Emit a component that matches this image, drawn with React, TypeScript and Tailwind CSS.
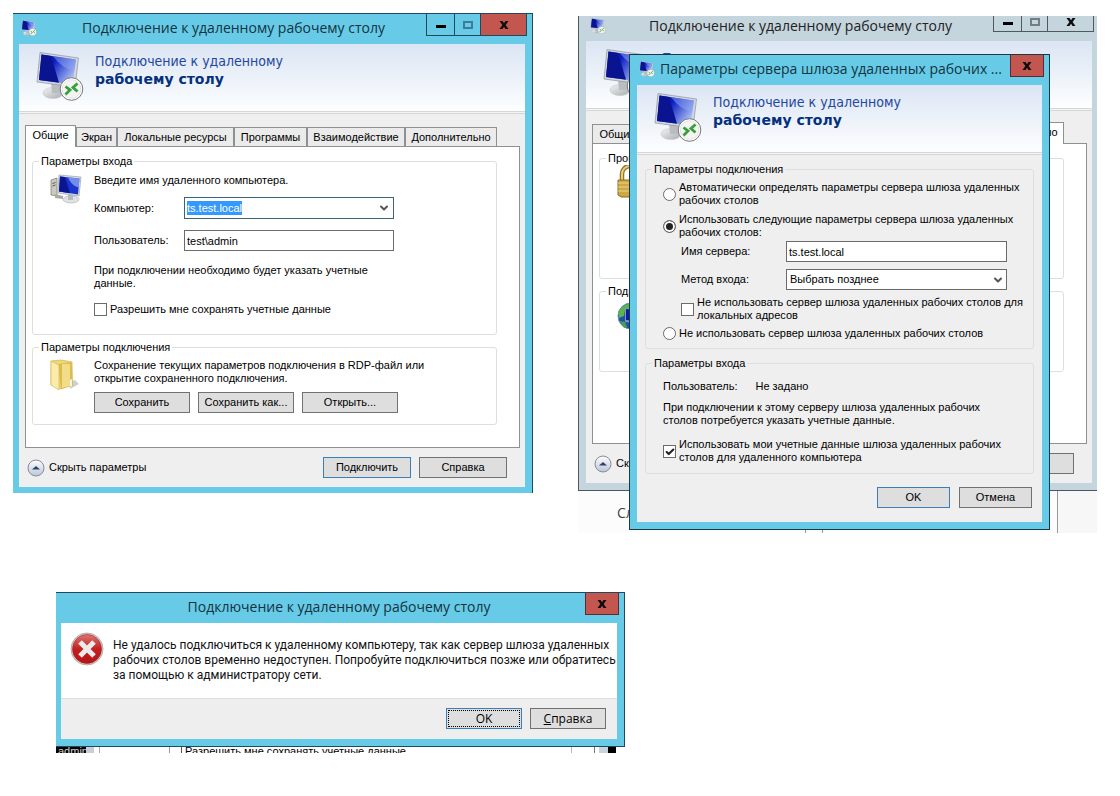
import type { ReactNode } from 'react';
import { Check, ChevronDown } from 'lucide-react';

const uiFont = "font-['Liberation_Sans',Arial,sans-serif]";
const titleFont = "font-['Open_Sans','Segoe_UI',sans-serif]";

function RdpIcon({ className }: { className: string }) {
  return (
    <svg viewBox="0 0 48 49" className={className} aria-hidden="true">
      <defs>
        <linearGradient id="screen" x1="0" y1="0" x2="1" y2="0.6">
          <stop offset="0" stopColor="#1420a8" />
          <stop offset="0.4" stopColor="#0b1cc0" />
          <stop offset="1" stopColor="#a9bdf5" />
        </linearGradient>
        <linearGradient id="stand" x1="0" y1="0" x2="1" y2="1">
          <stop offset="0" stopColor="#f4f4f4" />
          <stop offset="1" stopColor="#a8acb0" />
        </linearGradient>
      </defs>
      <ellipse cx="17" cy="41" rx="10" ry="5.5" fill="url(#stand)" stroke="#c2c6ca" strokeWidth="0.6" />
      <path d="M15 30l9 2v9h-8z" fill="#b9bdc2" />
      <path d="M4 0.5L42.5 6 39 35 1 30z" fill="#d3d7dd" stroke="#8d949e" strokeWidth="0.7" />
      <path d="M5.5 2.5L40 7.5 36.5 32.5 3 28z" fill="url(#screen)" />
      <path d="M5.5 2.5L15 4l8 26.7L3 28z" fill="#0a1390" />
      <path d="M17 4.2l23 3.3-1.5 11C31 18 23 12 17 4.2z" fill="#8fa9f5" opacity="0.5" />
      <circle cx="35.5" cy="37" r="11.3" fill="#fff" stroke="#777" strokeWidth="1" />
      <circle cx="35.5" cy="37" r="9.3" fill="#f4f4f2" stroke="#ddd" strokeWidth="0.8" />
      <path d="M29.5 34.5l4.5 3.5-4.5 4.5M41.5 31.5l-4.5 4 4.5 4" fill="none" stroke="#35a03a" strokeWidth="2.8" />
    </svg>
  );
}

function ComputerIcon() {
  return (
    <svg viewBox="0 0 32 30" className="h-[30px] w-8 shrink-0" aria-hidden="true">
      <path d="M1 6l6-2v18l-6-1z" fill="#c9c9bd" stroke="#85857c" strokeWidth="0.8" />
      <path d="M2.5 9.5l3-1M2.5 12l3-1" stroke="#55604e" />
      <path d="M5 20l8 2v3l-8-1z" fill="#a9aaa4" />
      <ellipse cx="21" cy="25.5" rx="8" ry="3.5" fill="#dfe1e4" stroke="#adb0b4" strokeWidth="0.6" />
      <path d="M18 20l5 1v5h-5z" fill="#b7bbc0" />
      <path d="M9 1l22 2-2 19-21-3z" fill="#dde1e6" stroke="#9aa0a8" strokeWidth="0.7" />
      <path d="M10 2.5L29.5 4.5 28 20.5 9 17.5z" fill="#1b34d0" />
      <path d="M10 2.5l5 .5 5 16.2L9 17.5z" fill="#0a1590" />
      <path d="M18 3.5L29.5 4.5l-.8 9C24 12.5 20 8.5 18 3.5z" fill="#8aa4f3" opacity="0.8" />
    </svg>
  );
}

function FolderIcon() {
  return (
    <svg viewBox="0 0 32 32" className="size-8 shrink-0" aria-hidden="true">
      <path d="M20 30l9-5-4-4-6 2z" fill="#cfcfcf" />
      <path d="M1 2l10-1 11 2v22l-11 5L1 26z" fill="#f0d878" stroke="#d0b24e" strokeWidth="0.7" />
      <path d="M8 5l14-2 1 24-12 3z" fill="#dcbb4f" />
      <path d="M12 5h8v22l-8 2z" fill="#f2dd86" />
      <path d="M1 2l8 4v25l-8-5z" fill="#fbecab" stroke="#d6ba5a" strokeWidth="0.7" />
      <path d="M20 21l2-1v7l-2 1z" fill="#eef3f2" />
    </svg>
  );
}

function LockIcon() {
  return (
    <svg viewBox="0 0 28 34" className="h-[34px] w-7" aria-hidden="true">
      <path d="M5 17V9a8 8 0 0 1 16 0v8" fill="none" stroke="#8f7327" strokeWidth="4.5" />
      <path d="M5 17V9a8 8 0 0 1 16 0v8" fill="none" stroke="#e8cf7a" strokeWidth="2" />
      <path d="M1 15h24v17H4l-3-2z" fill="#cfa843" stroke="#8d6c20" />
      <path d="M1 18h24M1 22h24M1 26h24" stroke="#ecd58b" />
    </svg>
  );
}

function GlobeIcon() {
  return (
    <svg viewBox="0 0 32 32" className="size-8" aria-hidden="true">
      <circle cx="14" cy="14" r="13" fill="#1f4fa8" stroke="#6d90b8" />
      <path d="M2 10c2-6 8-9 14-8l-3 5-5 1-1 6-5 2z" fill="#5cb548" />
      <path d="M3 19l5 1 2 5-3 1z" fill="#49a348" />
      <path d="M8 6l18 2v14L8 20z" fill="#7f97cf" />
      <path d="M9 7l16 2v11L9 18z" fill="#101c9c" />
      <path d="M14 25h10l2 4H13z" fill="#a9c6df" />
    </svg>
  );
}

function ErrorIcon() {
  return (
    <svg viewBox="0 0 34 34" className="size-[34px] shrink-0" aria-hidden="true">
      <defs>
        <linearGradient id="err" x1="0" y1="0" x2="0" y2="1">
          <stop offset="0" stopColor="#dd7773" />
          <stop offset="0.5" stopColor="#c31f20" />
          <stop offset="1" stopColor="#b81416" />
        </linearGradient>
      </defs>
      <circle cx="17" cy="17" r="16" fill="#d9d3d3" stroke="#a79a9a" strokeWidth="0.8" />
      <circle cx="17" cy="17" r="14.5" fill="url(#err)" stroke="#9b2426" strokeWidth="0.6" />
      <path d="M10 10l14 14M24 10L10 24" stroke="#eceaea" strokeWidth="5.2" />
    </svg>
  );
}

function CollapseIcon() {
  return (
    <svg viewBox="0 0 18 18" className="size-[18px]" aria-hidden="true">
      <defs>
        <linearGradient id="knob" x1="0" y1="0" x2="0" y2="1">
          <stop offset="0" stopColor="#fdfdfd" />
          <stop offset="1" stopColor="#bcc6d6" />
        </linearGradient>
      </defs>
      <circle cx="9" cy="9" r="8" fill="url(#knob)" stroke="#858d9b" />
      <path d="M5 10.5L9 7l4 3.5z" fill="#2a4170" />
    </svg>
  );
}

function CloseGlyph() {
  return (
    <svg viewBox="0 0 10 8" className="h-2 w-2.5" aria-hidden="true">
      <path d="M.5 0h3L5 2.2 6.5 0h3L6.6 4l2.9 4h-3L5 5.8 3.5 8h-3l2.9-4z" fill="#0d0d0d" />
    </svg>
  );
}

function CaptionButtons({ active }: { active: boolean }) {
  const line = active ? 'border-[#1d4a5e]' : 'border-[#4e585d]';
  const size = active ? 'h-[22px]' : 'h-4';
  return (
    <div className={`flex ${size}`}>
      <button aria-label="Свернуть" className={`flex w-7 items-center justify-center border-b border-l ${line}`}>
        <span className={`h-[3px] w-2.5 bg-black ${active ? 'mt-1' : ''}`} />
      </button>
      <button aria-label="Развернуть" className={`flex w-[26px] items-center justify-center border-b border-l ${line}`}>
        <span className={`h-2 w-2.5 border-2 ${active ? 'border-[#3c7c99]' : 'mb-1 border-[#737d82]'}`} />
      </button>
      <button
        aria-label="Закрыть"
        className={`flex w-[47px] items-center justify-center border-x border-b ${line} ${active ? 'bg-[#c3564e]' : 'pb-1'}`}
      >
        <CloseGlyph />
      </button>
    </div>
  );
}

function CloseButton() {
  return (
    <button
      aria-label="Закрыть"
      className="-mr-0.5 flex h-[22px] w-[34px] shrink-0 items-center justify-center border-x border-b border-[#5c2a35] bg-[#c3564e]"
    >
      <CloseGlyph />
    </button>
  );
}

function Banner({ product, name }: { product: string; name: string }) {
  return (
    <div>
      <div className="flex h-[67px] gap-[11px] bg-linear-to-b from-[#dbe5f3] to-[#fdfeff] pt-2 pl-[17px]">
        <RdpIcon className="h-[49px] w-12" />
        <div className="text-sm leading-[18px] text-[#1d47a0]">
          <p className="font-['DejaVu_Sans_Condensed',Tahoma,sans-serif]">{product}</p>
          <p className="font-['DejaVu_Sans',Verdana,sans-serif] font-bold text-[#04307e]">{name}</p>
        </div>
      </div>
      <div className="h-[3px] border-y border-[#d6d6d6] bg-[#f4f4f4]" />
    </div>
  );
}

function Group({ title, className, body, children }: { title: string; className?: string; body: string; children: ReactNode }) {
  return (
    <fieldset className={`min-w-0 rounded-[3px] border border-[#dcdfe1] ${className ?? ''}`}>
      <legend className="ml-1.5 px-0.5">{title}</legend>
      <div className={`pl-[17px] ${body}`}>{children}</div>
    </fieldset>
  );
}

function PushButton({ children, className, primary }: { children?: ReactNode; className: string; primary?: boolean }) {
  return (
    <button
      className={`flex h-[21px] items-center justify-center border bg-[#dedede] ${className} ${
        primary ? 'border-[#3d7fb5]' : 'border-[#717171]'
      }`}
    >
      {children}
    </button>
  );
}

const tabs = [
  { label: 'Общие', width: 'w-[51px]' },
  { label: 'Экран', width: 'w-[41px]' },
  { label: 'Локальные ресурсы', width: 'w-[117px]' },
  { label: 'Программы', width: 'w-[73px]' },
  { label: 'Взаимодействие', width: 'w-[98px]' },
  { label: 'Дополнительно', width: 'w-[92px]' },
];

function TabStrip({ active }: { active: number }) {
  return (
    <div role="tablist" className="flex h-[21px] items-end">
      {tabs.map((tab, i) => (
        <button
          key={tab.label}
          role="tab"
          aria-selected={i === active}
          className={`shrink-0 border border-b-0 border-[#8c9191] whitespace-nowrap ${tab.width} ${
            i === active ? 'relative -mb-px h-[22px] bg-white pb-0.5' : 'h-[19px] bg-[#ebebeb]'
          }`}
        >
          {tab.label}
        </button>
      ))}
    </div>
  );
}

function CheckBox({ id, checked }: { id: string; checked?: boolean }) {
  return (
    <span className="relative size-[13px] shrink-0">
      <input
        id={id}
        type="checkbox"
        defaultChecked={checked}
        className="peer block size-[13px] appearance-none border border-[#6b6b6b] bg-white"
      />
      <Check
        strokeWidth={5}
        className="pointer-events-none absolute top-0.5 left-0.5 hidden size-[10px] text-[#222] peer-checked:block"
      />
    </span>
  );
}

function Radio({ id, checked }: { id: string; checked?: boolean }) {
  return (
    <input
      id={id}
      type="radio"
      name="gateway"
      defaultChecked={checked}
      className="size-[13px] shrink-0 appearance-none rounded-full border border-[#6b6b6b] bg-white checked:bg-[#222] checked:shadow-[inset_0_0_0_2px_white]"
    />
  );
}

function ConnectionWindow() {
  return (
    <section className="absolute top-[13px] left-[13px] w-[520px] border-t border-r border-[#1d4a5e] bg-[#67cbe7] pr-[7px] pb-1.5 pl-1.5">
      <header className="-mr-0.5 flex h-[30px] items-start">
        <RdpIcon className="mt-1.5 ml-0.5 size-4 shrink-0" />
        <h1 className={`flex-1 pt-1 pl-1 text-center text-sm leading-5 text-[#123340] ${titleFont}`}>
          Подключение к удаленному рабочему столу
        </h1>
        <CaptionButtons active />
      </header>
      <div className="bg-[#efefef]">
        <Banner product="Подключение к удаленному" name="рабочему столу" />
        <div className="pt-[11px] pr-[5px] pl-1.5">
          <TabStrip active={0} />
          <div className="border border-[#8c9191] bg-white px-1.5 pt-2 pb-[22px]">
            <Group title="Параметры входа" className="mr-4" body="pt-1.5 pb-[18px]">
              <div className="flex gap-3">
                <ComputerIcon />
                <div className="flex-1">
                  <p>Введите имя удаленного компьютера.</p>
                  <div className="mt-2.5 flex items-center">
                    <label htmlFor="computer" className="w-[90px]">Компьютер:</label>
                    <span className="flex h-[22px] w-[210px] items-center justify-between border border-[#3a6377] bg-white pr-[3px] pl-0.5">
                      <select id="computer" className="field-sizing-content h-3.5 appearance-none bg-[#3399ff] text-white">
                        <option>ts.test.local</option>
                      </select>
                      <ChevronDown size={12} strokeWidth={4} className="text-[#555]" />
                    </span>
                  </div>
                  <div className="mt-[11px] flex items-center">
                    <label htmlFor="user" className="w-[90px]">Пользователь:</label>
                    <input
                      id="user"
                      defaultValue="test\admin"
                      className="h-[21px] w-[210px] border border-[#6b6b6b] bg-white px-0.5"
                    />
                  </div>
                  <p className="mt-[13px] w-[300px]">При подключении необходимо будет указать учетные данные.</p>
                  <div className="mt-[13px] flex items-center gap-[3px]">
                    <CheckBox id="remember" />
                    <label htmlFor="remember">Разрешить мне сохранять учетные данные</label>
                  </div>
                </div>
              </div>
            </Group>
            <Group title="Параметры подключения" className="mt-1.5 mr-4" body="pt-[5px] pb-2.5">
              <div className="flex gap-3">
                <FolderIcon />
                <div className="flex-1">
                  <p className="w-[350px]">
                    Сохранение текущих параметров подключения в RDP-файл или открытие сохраненного подключения.
                  </p>
                  <div className="mt-[7px] flex gap-2 pb-px">
                    <PushButton className="w-24">Сохранить</PushButton>
                    <PushButton className="w-24">Сохранить как...</PushButton>
                    <PushButton className="w-24">Открыть...</PushButton>
                  </div>
                </div>
              </div>
            </Group>
          </div>
        </div>
        <div className="flex items-center gap-2 pt-[9px] pr-[18px] pb-[9px] pl-2">
          <button className="mr-auto flex items-center gap-1">
            <CollapseIcon />
            Скрыть параметры
          </button>
          <PushButton primary className="w-22">Подключить</PushButton>
          <PushButton className="w-22">Справка</PushButton>
        </div>
      </div>
    </section>
  );
}

function InactiveWindow() {
  return (
    <section className="absolute top-4 left-[578px] w-[519px] overflow-hidden">
      <div className="border-b border-l border-[#4d585e] bg-[#c5d5dd] pr-[5px] pb-[7px] pl-[7px]">
        <header className="-mr-0.5 flex h-[25px] items-start">
          <RdpIcon className="mt-0.5 ml-1 size-4 shrink-0" />
          <h2 className={`flex-1 pl-0.5 text-center text-sm leading-5 text-[#222] ${titleFont}`}>
            Подключение к удаленному рабочему столу
          </h2>
          <CaptionButtons active={false} />
        </header>
        <div className="bg-[#efefef]">
          <Banner product="П" name="" />
          <div className="pt-[11px] pr-[5px] pl-1.5">
            <TabStrip active={5} />
            <div className="border border-[#8c9191] bg-white px-1.5 pt-2 pb-[71px]">
              <Group title="Проверка подлинности" className="mr-4" body="pb-[79px]">
                <LockIcon />
              </Group>
              <Group title="Подключение" className="mt-1.5 mr-4" body="pt-1 pb-[37px]">
                <GlobeIcon />
              </Group>
            </div>
          </div>
          <div className="flex items-center gap-2 pt-[9px] pr-[18px] pb-[9px] pl-2">
            <button aria-label="Скрыть параметры" className="mr-auto flex items-center gap-1">
              <CollapseIcon />
              Скр
            </button>
            <PushButton className="w-22" />
          </div>
        </div>
      </div>
      <div className="flex h-[42px] bg-[#fcfcfc]">
        <p className={`w-[227px] shrink-0 pt-3 pl-[39px] text-sm leading-5 text-[#444] ${titleFont}`}>Сл</p>
        <span className="w-[18px] shrink-0 border-x border-[#9a9a9a]" />
        <span className="w-[235px] shrink-0 border-r border-[#9a9a9a]" />
        <span className="flex-1 bg-[#f7f7f7]" />
      </div>
    </section>
  );
}

function GatewayDialog() {
  return (
    <section className="absolute top-[54px] left-[629px] w-[421px] border border-[#1b3a48] bg-[#67cbe7] px-[7px] pb-[7px]">
      <header className="flex h-[30px] items-start">
        <RdpIcon className="mt-1.5 ml-0.5 size-4 shrink-0" />
        <h2 className={`min-w-0 flex-1 pt-1 pl-[5px] text-sm leading-5 whitespace-nowrap text-[#123340] ${titleFont}`}>
          Параметры сервера шлюза удаленных рабочих ...
        </h2>
        <CloseButton />
      </header>
      <div className="bg-[#efefef]">
        <Banner product="Подключение к удаленному" name="рабочему столу" />
        <div className="px-2 pt-2">
          <Group title="Параметры подключения" body="pt-[5px] pb-2">
            <div className="flex items-center gap-[3px]">
              <Radio id="auto" />
              <label htmlFor="auto" className="w-[350px]">
                Автоматически определять параметры сервера шлюза удаленных рабочих столов
              </label>
            </div>
            <div className="mt-1.5 flex items-center gap-[3px]">
              <Radio id="manual" checked />
              <label htmlFor="manual" className="w-[350px]">
                Использовать следующие параметры сервера шлюза удаленных рабочих столов:
              </label>
            </div>
            <div className="mt-0.5 flex items-center pl-[18px]">
              <label htmlFor="server" className="w-[105px]">Имя сервера:</label>
              <input
                id="server"
                defaultValue="ts.test.local"
                className="h-[21px] w-[221px] border border-[#6b6b6b] bg-white px-0.5"
              />
            </div>
            <div className="mt-[7px] flex items-center pl-[18px]">
              <label htmlFor="method" className="w-[105px]">Метод входа:</label>
              <span className="relative">
                <select
                  id="method"
                  className="block h-[21px] w-[221px] appearance-none border border-[#6b6b6b] bg-white px-[3px]"
                >
                  <option>Выбрать позднее</option>
                </select>
                <ChevronDown
                  size={12}
                  strokeWidth={4}
                  className="pointer-events-none absolute top-[5px] right-[3px] text-[#555]"
                />
              </span>
            </div>
            <div className="mt-1.5 flex items-center gap-[3px] pl-[18px]">
              <CheckBox id="bypass" />
              <label htmlFor="bypass" className="w-[340px]">
                Не использовать сервер шлюза удаленных рабочих столов для локальных адресов
              </label>
            </div>
            <div className="mt-[5px] flex items-center gap-[3px]">
              <Radio id="none" />
              <label htmlFor="none">Не использовать сервер шлюза удаленных рабочих столов</label>
            </div>
          </Group>
          <Group title="Параметры входа" className="mt-2" body="pt-2.5 pb-[9px]">
            <p className="flex gap-[18px]">
              <span>Пользователь:</span>
              <span>Не задано</span>
            </p>
            <p className="mt-2 w-[330px]">
              При подключении к этому серверу шлюза удаленных рабочих столов потребуется указать учетные данные.
            </p>
            <div className="mt-[11px] flex items-center gap-[3px]">
              <CheckBox id="creds" checked />
              <label htmlFor="creds" className="w-[330px]">
                Использовать мои учетные данные шлюза удаленных рабочих столов для удаленного компьютера
              </label>
            </div>
          </Group>
        </div>
        <div className="flex justify-end gap-[9px] pt-[13px] pr-2.5 pb-3.5">
          <PushButton primary className="w-[73px]">OK</PushButton>
          <PushButton className="w-[73px]">Отмена</PushButton>
        </div>
      </div>
    </section>
  );
}

function ErrorDialog() {
  return (
    <section className={`absolute top-[592px] left-14 w-[569px] text-xs leading-[15px] ${titleFont}`}>
      <div className="border-y border-r border-[#1d4a5e] bg-[#67cbe7] pr-[7px] pb-[7px] pl-[5px]">
        <header className="flex h-[30px] items-start">
          <h2 className="flex-1 pt-1 pl-8 text-center text-sm leading-5 text-[#123340]">
            Подключение к удаленному рабочему столу
          </h2>
          <CloseButton />
        </header>
        <div className="flex gap-[9px] border-b border-[#dfdfdf] bg-white pt-[9px] pb-[15px] pl-[9px]">
          <ErrorIcon />
          <p className="pt-1.5 font-[Roboto,'Segoe_UI',sans-serif] whitespace-nowrap text-[#111]">
            Не удалось подключиться к удаленному компьютеру, так как сервер шлюза удаленных
            <br />
            рабочих столов временно недоступен. Попробуйте подключиться позже или обратитесь
            <br />
            за помощью к администратору сети.
          </p>
        </div>
        <div className="flex justify-end gap-2 bg-[#eeeeee] pt-[9px] pr-[11px] pb-2.5">
          <PushButton primary className="w-[76px] outline-1 -outline-offset-3 outline-black outline-dotted">OK</PushButton>
          <PushButton className="w-[76px]">
            <span>
              <u>С</u>правка
            </span>
          </PushButton>
        </div>
      </div>
      <div className={`flex h-1.5 overflow-hidden bg-white text-[11px] leading-[9px] text-black ${uiFont}`}>
        <span className="w-[30px] bg-black pl-0.5 text-[#d0d0d0]">admin</span>
        <span className="w-2 bg-[#c9ced6]" />
        <span className="w-1.5 border-r border-[#aaa]" />
        <span className="w-[70px] border-r border-[#999]" />
        <span className="w-3 border-r border-[#555]" />
        <span className="w-[390px] border-r border-[#bbb] pl-[3px]">Разрешить мне сохранять учетные данные</span>
        <span className="w-[23px] border-r border-[#777]" />
        <span className="ml-1 w-[9px] bg-[#c7d3df]" />
        <span className="w-2 bg-black" />
      </div>
    </section>
  );
}

export default function App() {
  return (
    <main className={`relative min-h-screen overflow-hidden bg-white text-[11px] leading-[13px] text-black ${uiFont}`}>
      <ConnectionWindow />
      <InactiveWindow />
      <GatewayDialog />
      <ErrorDialog />
    </main>
  );
}
